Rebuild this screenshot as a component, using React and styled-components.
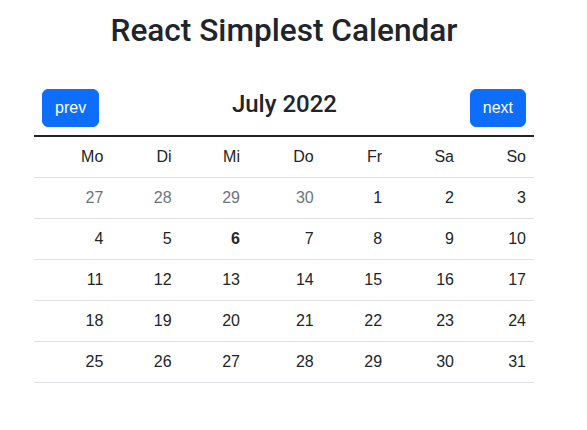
import React from "react";
import styled, { createGlobalStyle } from "styled-components";

const GlobalStyle = createGlobalStyle`
  body {
    margin: 0;
    background: #fff;
    color: #212529;
    font-family: "Liberation Sans", Arial, sans-serif;
    font-size: 16px;
    line-height: 1.5;
  }
`;

const Page = styled.div`
  width: 568px;
  padding-top: 12px;
`;

const Title = styled.h1`
  margin: 0 0 40px;
  font-family: Roboto, "Liberation Sans", sans-serif;
  font-size: 31.6px;
  font-weight: 500;
  line-height: 37px;
  text-align: center;
`;

const Calendar = styled.div`
  width: 500px;
  margin: 0 auto;
`;

const Nav = styled.div`
  display: flex;
  align-items: center;
  justify-content: space-between;
  padding: 0 8px;
  margin-bottom: 8px;
`;

const Month = styled.h3`
  margin: 0 0 8px;
  font-family: Roboto, "Liberation Sans", sans-serif;
  font-size: 24px;
  font-weight: 500;
  line-height: 1.2;
`;

const Btn = styled.button`
  border: 1px solid #0d6efd;
  border-radius: 6px;
  background: #0d6efd;
  color: #fff;
  font-family: inherit;
  font-size: 16px;
  line-height: 24px;
  padding: 6px 12px;
  cursor: pointer;
`;

const Table = styled.table`
  width: 100%;
  border-collapse: collapse;
  border-top: 2px solid #212529;
`;

const Th = styled.th`
  font-weight: 400;
  text-align: right;
  padding: 8px;
  border-bottom: 1px solid #dee2e6;
`;

const Td = styled.td`
  text-align: right;
  padding: 8px;
  border-bottom: 1px solid #dee2e6;
  color: ${(p) => (p.$muted ? "#6c757d" : "#212529")};
  font-weight: ${(p) => (p.$today ? 700 : 400)};
`;

const days = ["Mo", "Di", "Mi", "Do", "Fr", "Sa", "So"];

const weeks = (() => {
  const cells = [27, 28, 29, 30].map((d) => ({ d, muted: true }));
  for (let i = 1; i <= 31; i++) cells.push({ d: i, today: i === 6 });
  const rows = [];
  for (let i = 0; i < cells.length; i += 7) rows.push(cells.slice(i, i + 7));
  return rows;
})();

export default function App() {
  return (
    <Page>
      <GlobalStyle />
      <Title>React Simplest Calendar</Title>
      <Calendar>
        <Nav>
          <Btn>prev</Btn>
          <Month>July 2022</Month>
          <Btn>next</Btn>
        </Nav>
        <Table>
          <thead>
            <tr>
              {days.map((d) => (
                <Th key={d}>{d}</Th>
              ))}
            </tr>
          </thead>
          <tbody>
            {weeks.map((w, i) => (
              <tr key={i}>
                {w.map((c, j) => (
                  <Td key={j} $muted={c.muted} $today={c.today}>
                    {c.d}
                  </Td>
                ))}
              </tr>
            ))}
          </tbody>
        </Table>
      </Calendar>
    </Page>
  );
}
